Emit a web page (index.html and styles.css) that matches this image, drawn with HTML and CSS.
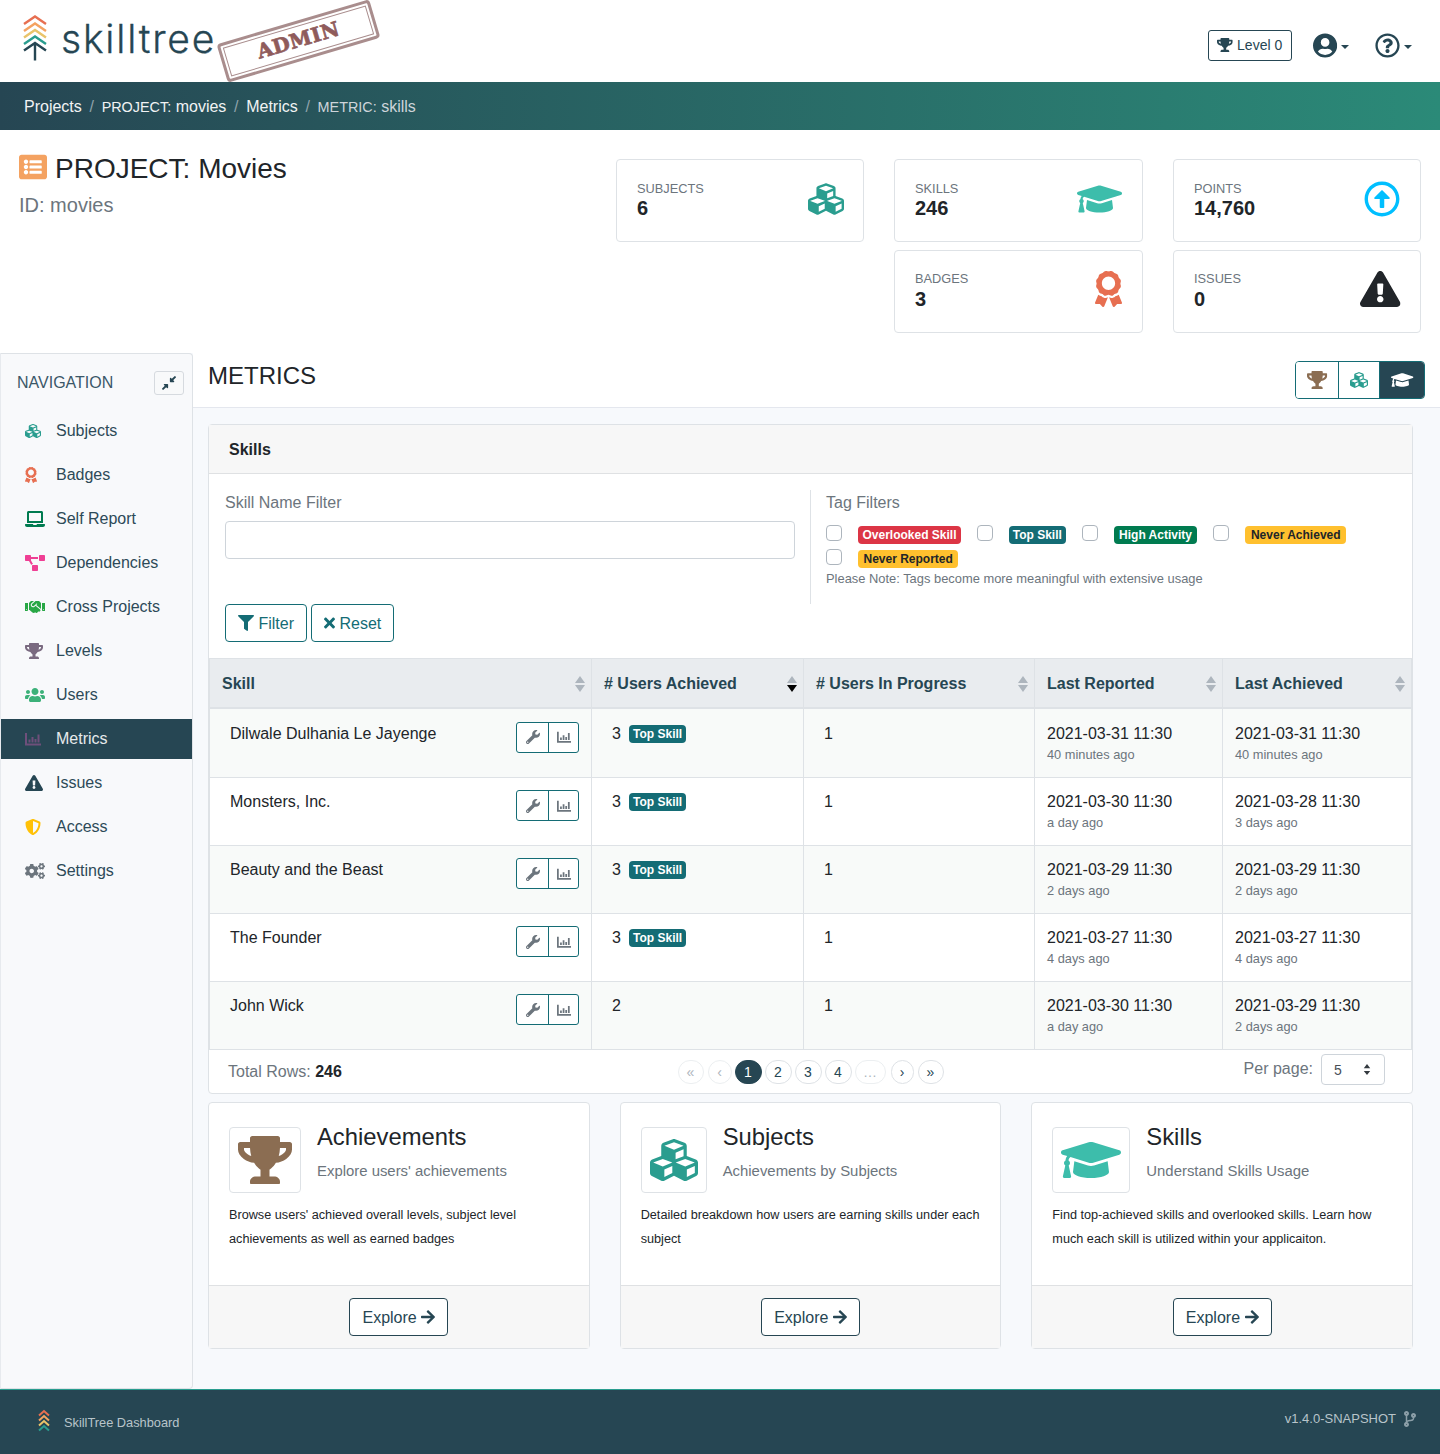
FILE: index.html
```html
<!DOCTYPE html>
<html lang="en">
<head>
<meta charset="utf-8">
<title>SkillTree Dashboard</title>
<link rel="stylesheet" href="styles.css">
</head>
<body>
<svg class="sprite" aria-hidden="true">
<symbol id="trophy" viewBox="0 0 576 512"><path d="M552 64H448V24c0-13.3-10.7-24-24-24H152c-13.3 0-24 10.7-24 24v40H24C10.7 64 0 74.7 0 88v56c0 35.7 22.5 72.4 61.9 100.7 31.5 22.7 69.8 37.1 110 41.7C203.3 338.5 240 360 240 360v72h-48c-35.3 0-64 20.7-64 56v12c0 6.6 5.4 12 12 12h296c6.6 0 12-5.4 12-12v-12c0-35.3-28.7-56-64-56h-48v-72s36.7-21.5 68.1-73.6c40.3-4.6 78.7-19 110-41.7 39.3-28.3 61.9-65 61.9-100.7V88c0-13.3-10.7-24-24-24zM99.3 192.8C74.9 175.2 64 155.6 64 144v-16h64.2c1 32.6 5.8 61.2 12.8 86.2-15.1-5.2-29.2-12.4-41.7-21.4zM512 144c0 16.1-17.7 36.1-35.3 48.8-12.5 9-26.7 16.2-41.8 21.4 7-25 11.8-53.6 12.8-86.2H512v16z"/></symbol>
<symbol id="cap" viewBox="0 0 640 512"><path d="M622.34 153.2L343.4 67.5c-15.2-4.67-31.6-4.67-46.79 0L17.66 153.2c-23.54 7.23-23.54 38.36 0 45.59l48.63 14.94c-10.67 13.19-17.23 29.28-17.88 46.9C38.78 266.15 32 276.11 32 288c0 10.78 5.68 19.85 13.86 25.65L20.33 428.53C18.11 438.52 25.71 448 35.94 448h56.11c10.24 0 17.84-9.48 15.62-19.47L82.14 313.65C90.32 307.85 96 298.78 96 288c0-11.57-6.47-21.25-15.66-26.87.76-15.02 8.44-28.3 20.69-36.72L296.6 284.5c9.06 2.78 26.44 6.25 46.79 0l278.95-85.7c23.55-7.24 23.55-38.36 0-45.6zM352.79 315.09c-28.53 8.76-52.84 3.92-65.59 0l-145.02-44.55L128 384c0 35.35 85.96 64 192 64s192-28.65 192-64l-14.18-113.47-145.03 44.56z"/></symbol>
<symbol id="cubes" viewBox="0 0 512 512"><path d="M488.6 250.2L392 214V105.5c0-15-9.3-28.4-23.4-33.7l-100-37.5c-8.1-3.1-17.1-3.1-25.3 0l-100 37.5c-14.1 5.3-23.4 18.7-23.4 33.7V214l-96.6 36.2C9.3 255.5 0 268.9 0 283.9V394c0 13.6 7.7 26.1 19.9 32.2l100 50c10.1 5.1 22.1 5.1 32.2 0l103.9-52 103.9 52c10.1 5.1 22.1 5.1 32.2 0l100-50c12.2-6.1 19.9-18.6 19.9-32.2V283.9c0-15-9.3-28.4-23.4-33.7zM358 214.8l-85 31.9v-68.2l85-37v73.3zM154 104.1l102-38.2 102 38.2v.6l-102 41.4-102-41.4v-.6zm84 291.1l-85 42.5v-79.1l85-38.8v75.4zm0-112l-102 41.4-102-41.4v-.6l102-38.2 102 38.2v.6zm240 112l-85 42.5v-79.1l85-38.8v75.4zm0-112l-102 41.4-102-41.4v-.6l102-38.2 102 38.2v.6z"/></symbol>
<symbol id="up" viewBox="0 0 512 512"><path d="M256 504c137 0 248-111 248-248S393 8 256 8 8 119 8 256s111 248 248 248zm0-448c110.5 0 200 89.5 200 200s-89.5 200-200 200S56 366.5 56 256 145.5 56 256 56zm20 328h-40c-6.6 0-12-5.4-12-12V256h-67c-10.7 0-16-12.9-8.5-20.5l99-99c4.7-4.7 12.3-4.7 17 0l99 99c7.6 7.6 2.2 20.5-8.5 20.5h-67v116c0 6.6-5.4 12-12 12z"/></symbol>
<symbol id="award" viewBox="0 0 384 512"><path d="M97.12 362.63c-8.69-8.69-4.16-6.24-25.12-11.85-9.51-2.55-17.87-7.45-25.43-13.32L1.2 448.7c-4.39 10.77 3.81 22.47 15.43 22.03l52.69-2.01L105.56 507c8 8.44 22.04 5.81 26.43-4.96l52.05-127.62c-10.84 6.04-22.87 9.58-35.31 9.58-19.5 0-37.82-7.59-51.61-21.37zM382.8 448.7l-45.37-111.24c-7.56 5.88-15.92 10.77-25.43 13.32-21.07 5.64-16.45 3.18-25.12 11.85-13.79 13.78-32.12 21.37-51.62 21.37-12.44 0-24.47-3.55-35.31-9.58L252 502.04c4.39 10.77 18.44 13.4 26.43 4.96l36.25-38.28 52.69 2.01c11.62.44 19.82-11.27 15.43-22.03zM263 340c15.28-15.55 17.03-14.21 38.79-20.14 13.89-3.79 24.75-14.84 28.47-28.98 7.48-28.4 5.54-24.97 25.95-45.75 10.17-10.35 14.14-25.44 10.42-39.58-7.47-28.38-7.48-24.42 0-52.83 3.72-14.14-.25-29.23-10.42-39.58-20.41-20.78-18.47-17.36-25.95-45.75-3.72-14.14-14.58-25.19-28.47-28.98-27.88-7.61-24.52-5.62-44.95-26.41-10.17-10.35-25-14.4-38.89-10.61-27.87 7.6-23.98 7.61-51.9 0-13.89-3.79-28.72.25-38.89 10.61-20.41 20.78-17.05 18.8-44.94 26.41-13.89 3.79-24.75 14.84-28.47 28.98-7.47 28.39-5.54 24.97-25.95 45.75-10.17 10.35-14.15 25.44-10.42 39.58 7.47 28.36 7.48 24.4 0 52.82-3.72 14.14.25 29.23 10.42 39.59 20.41 20.78 18.47 17.35 25.95 45.75 3.72 14.14 14.58 25.19 28.47 28.98C104.6 325.96 106.27 325 121 340c13.23 13.47 33.84 15.88 49.74 5.82a39.676 39.676 0 0 1 42.53 0c15.89 10.06 36.5 7.65 49.73-5.82zM97.66 175.96c0-53.03 42.24-96.02 94.34-96.02s94.34 42.99 94.34 96.02-42.24 96.02-94.34 96.02-94.34-42.99-94.34-96.02z"/></symbol>
<symbol id="warn" viewBox="0 0 576 512"><path d="M569.517 440.013C587.975 472.007 564.806 512 527.94 512H48.054c-36.937 0-59.999-40.055-41.577-71.987L246.423 24c18.467-32.009 64.72-31.951 83.154 0l239.94 416.013zM288 354c-25.405 0-46 20.595-46 46s20.595 46 46 46 46-20.595 46-46-20.595-46-46-46zm-43.673-165.346l7.418 136c.347 6.364 5.609 11.346 11.982 11.346h48.546c6.373 0 11.635-4.982 11.982-11.346l7.418-136c.375-6.874-5.098-12.654-11.982-12.654h-63.383c-6.884 0-12.356 5.78-11.981 12.654z"/></symbol>
<symbol id="listalt" viewBox="0 0 512 512"><path d="M464 480H48c-26.51 0-48-21.49-48-48V80c0-26.51 21.49-48 48-48h416c26.51 0 48 21.49 48 48v352c0 26.51-21.49 48-48 48zM128 120c-22.091 0-40 17.909-40 40s17.909 40 40 40 40-17.909 40-40-17.909-40-40-40zm0 96c-22.091 0-40 17.909-40 40s17.909 40 40 40 40-17.909 40-40-17.909-40-40-40zm0 96c-22.091 0-40 17.909-40 40s17.909 40 40 40 40-17.909 40-40-17.909-40-40-40zm288-136v-32c0-6.627-5.373-12-12-12H204c-6.627 0-12 5.373-12 12v32c0 6.627 5.373 12 12 12h200c6.627 0 12-5.373 12-12zm0 96v-32c0-6.627-5.373-12-12-12H204c-6.627 0-12 5.373-12 12v32c0 6.627 5.373 12 12 12h200c6.627 0 12-5.373 12-12zm0 96v-32c0-6.627-5.373-12-12-12H204c-6.627 0-12 5.373-12 12v32c0 6.627 5.373 12 12 12h200c6.627 0 12-5.373 12-12z"/></symbol>
<symbol id="user" viewBox="0 0 496 512"><path d="M248 8C111 8 0 119 0 256s111 248 248 248 248-111 248-248S385 8 248 8zm0 96c48.6 0 88 39.4 88 88s-39.4 88-88 88-88-39.4-88-88 39.4-88 88-88zm0 344c-58.7 0-111.3-26.6-146.5-68.2 18.8-35.4 55.6-59.8 98.5-59.8 2.4 0 4.8.4 7.1 1.1 13 4.2 26.6 6.9 40.9 6.9 14.3 0 28-2.7 40.9-6.9 2.3-.7 4.7-1.1 7.1-1.1 42.9 0 79.7 24.4 98.5 59.8C359.3 421.4 306.7 448 248 448z"/></symbol>
<symbol id="help" viewBox="0 0 512 512"><path d="M256 8C119.043 8 8 119.083 8 256c0 136.997 111.043 248 248 248s248-111.003 248-248C504 119.083 392.957 8 256 8zm0 448c-110.532 0-200-89.431-200-200 0-110.495 89.472-200 200-200 110.491 0 200 89.471 200 200 0 110.53-89.431 200-200 200zm107.244-255.2c0 67.052-72.421 68.084-72.421 92.863V300c0 6.627-5.373 12-12 12h-45.647c-6.627 0-12-5.373-12-12v-8.659c0-35.745 27.1-50.034 47.579-61.516 17.561-9.845 28.324-16.541 28.324-29.579 0-17.246-21.999-28.693-39.784-28.693-23.189 0-33.894 10.977-48.942 29.969-4.057 5.12-11.46 6.071-16.666 2.124l-27.824-21.098c-5.107-3.872-6.251-11.066-2.644-16.363C184.846 131.491 214.94 112 261.794 112c49.071 0 101.45 38.304 101.45 88.8zM298 368c0 23.159-18.841 42-42 42s-42-18.841-42-42 18.841-42 42-42 42 18.841 42 42z"/></symbol>
<symbol id="filter" viewBox="0 0 512 512"><path d="M487.976 0H24.028C2.71 0-8.047 25.866 7.058 40.971L192 225.941V432c0 7.831 3.821 15.17 10.237 19.662l80 55.98C298.02 518.69 320 507.493 320 487.98V225.941l184.947-184.97C520.021 25.896 509.338 0 487.976 0z"/></symbol>
<symbol id="times" viewBox="0 0 352 512"><path d="M242.72 256l100.07-100.07c12.28-12.28 12.28-32.19 0-44.48l-22.24-22.24c-12.28-12.28-32.19-12.28-44.48 0L176 189.28 75.93 89.21c-12.28-12.28-32.19-12.28-44.48 0L9.21 111.45c-12.28 12.28-12.28 32.19 0 44.48L109.28 256 9.21 356.07c-12.28 12.28-12.28 32.19 0 44.48l22.24 22.24c12.28 12.28 32.2 12.28 44.48 0L176 322.72l100.07 100.07c12.28 12.28 32.2 12.28 44.48 0l22.24-22.24c12.28-12.28 12.28-32.19 0-44.48L242.72 256z"/></symbol>
<symbol id="wrench" viewBox="0 0 512 512"><path d="M507.73 109.1c-2.24-9.03-13.54-12.09-20.12-5.51l-74.36 74.36-67.88-11.31-11.31-67.88 74.36-74.36c6.62-6.62 3.43-17.9-5.66-20.16-47.38-11.74-99.55.91-136.58 37.93-39.64 39.64-50.55 97.1-34.05 147.2L18.74 402.76c-24.99 24.99-24.99 65.51 0 90.5 24.99 24.99 65.51 24.99 90.5 0l213.21-213.21c50.12 16.71 107.47 5.68 147.37-34.22 37.07-37.07 49.7-89.32 37.91-136.73zM64 472c-13.25 0-24-10.75-24-24 0-13.26 10.75-24 24-24s24 10.74 24 24c0 13.25-10.75 24-24 24z"/></symbol>
<symbol id="chart" viewBox="0 0 16 16"><path d="M0 2h2v10.500h14v2H0zM3.500 8.500h2v3h-2zM6.500 6h2v5.500h-2zM9.500 8h2v3.500h-2zM12.500 3.500h2v8h-2z"/></symbol>
<symbol id="arrow" viewBox="0 0 448 512"><path d="M190.5 66.9l22.2-22.2c9.4-9.4 24.6-9.4 33.9 0L441 239c9.4 9.4 9.4 24.6 0 33.9L246.6 467.3c-9.4 9.4-24.6 9.4-33.9 0l-22.2-22.2c-9.5-9.5-9.3-25 .4-34.3L311.4 296H24c-13.3 0-24-10.7-24-24v-32c0-13.3 10.7-24 24-24h287.4L190.9 101.2c-9.8-9.3-10-24.8-.4-34.3z"/></symbol>
<symbol id="users" viewBox="0 0 640 512"><path d="M96 224c35.3 0 64-28.7 64-64s-28.7-64-64-64-64 28.7-64 64 28.7 64 64 64zm448 0c35.3 0 64-28.7 64-64s-28.7-64-64-64-64 28.7-64 64 28.7 64 64 64zm32 32h-64c-17.6 0-33.5 7.1-45.1 18.6 40.3 22.1 68.9 62 75.1 109.4h66c17.7 0 32-14.3 32-32v-32c0-35.3-28.7-64-64-64zm-256 0c61.9 0 112-50.1 112-112S381.9 32 320 32 208 82.1 208 144s50.1 112 112 112zm76.8 32h-8.3c-20.8 10-43.9 16-68.5 16s-47.6-6-68.5-16h-8.3C179.6 288 128 339.6 128 403.2V432c0 26.5 21.5 48 48 48h288c26.5 0 48-21.5 48-48v-28.8c0-63.6-51.6-115.2-115.2-115.2zm-223.7-13.4C161.5 263.1 145.6 256 128 256H64c-35.3 0-64 28.7-64 64v32c0 17.7 14.3 32 32 32h65.9c6.3-47.4 34.9-87.3 75.2-109.4z"/></symbol>
<symbol id="laptop" viewBox="0 0 640 512"><path d="M624 416H381.54c-.74 19.81-14.71 32-32.74 32H288c-18.69 0-33.02-17.47-32.77-32H16c-8.8 0-16 7.2-16 16v16c0 35.2 28.8 64 64 64h512c35.2 0 64-28.8 64-64v-16c0-8.8-7.2-16-16-16zM576 48c0-26.4-21.6-48-48-48H112C85.6 0 64 21.6 64 48v336h512V48zm-64 272H128V64h384v256z"/></symbol>
<symbol id="diagram" viewBox="0 0 640 512"><path d="M384 320H256c-17.67 0-32 14.33-32 32v128c0 17.67 14.33 32 32 32h128c17.67 0 32-14.33 32-32V352c0-17.67-14.33-32-32-32zM192 32c0-17.67-14.33-32-32-32H32C14.33 0 0 14.33 0 32v128c0 17.67 14.33 32 32 32h95.72l73.16 128.04C211.98 300.98 232.4 288 256 288h.28L192 175.51V128h224V64H192V32zM608 0H480c-17.67 0-32 14.33-32 32v128c0 17.67 14.33 32 32 32h128c17.67 0 32-14.33 32-32V32c0-17.67-14.33-32-32-32z"/></symbol>
<symbol id="handshake" viewBox="0 0 640 512"><path d="M434.7 64h-85.9c-8 0-15.7 3-21.6 8.4l-98.3 90c-.1.1-.2.3-.3.4-16.6 15.6-16.3 40.5-2.1 56 12.7 13.9 39.4 17.6 56.1 2.7.1-.1.3-.1.4-.2l79.9-73.2c6.5-5.9 16.7-5.5 22.6 1 6 6.5 5.5 16.6-1 22.6l-26.1 23.9L504 313.8c2.9 2.4 5.5 5 7.9 7.7V128l-54.6-54.6c-5.9-6-14.1-9.4-22.6-9.4zM544 128.2v223.9c0 17.7 14.3 32 32 32h64V128.2h-96zm48 223.9c-8.8 0-16-7.2-16-16s7.2-16 16-16 16 7.2 16 16-7.2 16-16 16zM0 384h64c17.7 0 32-14.3 32-32V128.2H0V384zm48-63.9c8.8 0 16 7.2 16 16s-7.2 16-16 16-16-7.2-16-16c0-8.9 7.2-16 16-16zm435.9 18.6L334.6 217.5l-30 27.5c-29.7 27.1-75.2 24.5-101.7-4.4-26.9-29.4-24.8-74.9 4.4-101.7L289.1 64h-83.8c-8.5 0-16.6 3.4-22.6 9.4L128 128v223.9h18.3l90.5 81.9c27.4 22.3 67.7 18.1 90-9.3l.2-.2 17.9 15.5c15.9 13 39.4 10.5 52.3-5.4l31.4-38.6 5.4 4.4c13.7 11.1 33.9 9.1 45-4.7l9.5-11.7c11.2-13.8 9.1-33.9-4.6-45.1z"/></symbol>
<symbol id="shield" viewBox="0 0 512 512"><path d="M466.5 83.7l-192-80a48.15 48.15 0 0 0-36.9 0l-192 80C27.7 91.1 16 108.6 16 128c0 198.5 114.5 335.7 221.5 380.3 11.8 4.9 25.1 4.9 36.9 0C360.1 472.6 496 349.3 496 128c0-19.4-11.7-36.9-29.5-44.3zM256.1 446.3l-.1-381 175.9 73.3c-3.3 151.4-82.1 261.1-175.8 307.7z"/></symbol>
<symbol id="cogs" viewBox="0 0 640 512"><path d="M512.1 191l-8.2 14.3c-3 5.3-9.4 7.5-15.1 5.4-11.8-4.4-22.6-10.7-32.1-18.6-4.6-3.8-5.8-10.5-2.8-15.7l8.2-14.3c-6.9-8-12.3-17.3-15.9-27.4h-16.5c-6 0-11.2-4.3-12.2-10.3-2-12-2.1-24.6 0-37.1 1-6 6.2-10.4 12.2-10.4h16.5c3.6-10.1 9-19.4 15.9-27.4l-8.2-14.3c-3-5.2-1.9-11.9 2.8-15.7 9.5-7.9 20.4-14.2 32.1-18.6 5.7-2.1 12.1.1 15.1 5.4l8.2 14.3c10.5-1.9 21.2-1.9 31.7 0L552 6.3c3-5.3 9.4-7.5 15.1-5.4 11.8 4.4 22.6 10.7 32.1 18.6 4.6 3.8 5.8 10.5 2.8 15.7l-8.2 14.3c6.9 8 12.3 17.3 15.9 27.4h16.5c6 0 11.2 4.3 12.2 10.3 2 12 2.1 24.6 0 37.1-1 6-6.2 10.4-12.2 10.4h-16.5c-3.6 10.1-9 19.4-15.9 27.4l8.2 14.3c3 5.2 1.9 11.9-2.8 15.7-9.5 7.9-20.4 14.2-32.1 18.6-5.7 2.1-12.1-.1-15.1-5.4l-8.2-14.3c-10.4 1.9-21.2 1.9-31.7 0zm-10.5-58.8c38.5 29.6 82.4-14.3 52.8-52.8-38.5-29.7-82.4 14.3-52.8 52.8zM386.3 286.1l33.7 16.8c10.1 5.8 14.5 18.1 10.5 29.1-8.9 24.2-26.4 46.4-42.6 65.8-7.4 8.9-20.2 11.1-30.3 5.3l-29.1-16.8c-16 13.7-34.6 24.6-54.9 31.7v33.6c0 11.6-8.3 21.6-19.7 23.6-24.6 4.2-50.4 4.4-75.9 0-11.5-2-20-11.9-20-23.6V418c-20.3-7.2-38.9-18-54.9-31.7L74 403c-10 5.8-22.9 3.6-30.3-5.3-16.2-19.4-33.3-41.6-42.2-65.7-4-10.9.4-23.2 10.5-29.1l33.3-16.8c-3.9-20.9-3.9-42.4 0-63.4L12 205.8c-10.1-5.8-14.6-18.1-10.5-29 8.9-24.2 26-46.4 42.2-65.8 7.4-8.9 20.2-11.1 30.3-5.3l29.1 16.8c16-13.7 34.6-24.6 54.9-31.7V57.1c0-11.5 8.2-21.5 19.6-23.5 24.6-4.2 50.5-4.4 76-.1 11.5 2 20 11.9 20 23.6v33.6c20.3 7.2 38.9 18 54.9 31.7l29.1-16.8c10-5.8 22.9-3.6 30.3 5.3 16.2 19.4 33.2 41.6 42.1 65.8 4 10.9.1 23.2-10 29.1l-33.7 16.8c3.9 21 3.9 42.5 0 63.5zm-117.6 21.1c59.2-77-28.7-164.9-105.7-105.7-59.2 77 28.7 164.9 105.7 105.7zm243.4 182.7l-8.2 14.3c-3 5.3-9.4 7.5-15.1 5.4-11.8-4.4-22.6-10.7-32.1-18.6-4.6-3.8-5.8-10.5-2.8-15.7l8.2-14.3c-6.9-8-12.3-17.3-15.9-27.4h-16.5c-6 0-11.2-4.3-12.2-10.3-2-12-2.1-24.6 0-37.1 1-6 6.2-10.4 12.2-10.4h16.5c3.6-10.1 9-19.4 15.9-27.4l-8.2-14.3c-3-5.2-1.9-11.9 2.8-15.7 9.5-7.9 20.4-14.2 32.1-18.6 5.7-2.1 12.1.1 15.1 5.4l8.2 14.3c10.5-1.9 21.2-1.9 31.7 0l8.2-14.3c3-5.3 9.4-7.5 15.1-5.4 11.8 4.4 22.6 10.7 32.1 18.6 4.6 3.8 5.8 10.5 2.8 15.7l-8.2 14.3c6.9 8 12.3 17.3 15.9 27.4h16.5c6 0 11.2 4.3 12.2 10.3 2 12 2.1 24.6 0 37.1-1 6-6.2 10.4-12.2 10.4h-16.5c-3.6 10.1-9 19.4-15.9 27.4l8.2 14.3c3 5.2 1.9 11.9-2.8 15.7-9.5 7.9-20.4 14.2-32.1 18.6-5.7 2.1-12.1-.1-15.1-5.4l-8.2-14.3c-10.4 1.9-21.2 1.9-31.7 0zM501.6 431c38.5 29.6 82.4-14.3 52.8-52.8-38.5-29.6-82.4 14.3-52.8 52.8z"/></symbol>
<symbol id="compress" viewBox="0 0 512 512"><path d="M200 288H88c-21.4 0-32.1 25.8-17 41l32.9 31-99.2 99.3c-6.2 6.2-6.2 16.4 0 22.6l25.4 25.4c6.2 6.2 16.4 6.2 22.6 0L152 408l31.1 33c15.1 15.1 40.9 4.4 40.9-17V312c0-13.3-10.7-24-24-24zm112-64h112c21.4 0 32.1-25.9 17-41l-33-31 99.3-99.3c6.2-6.2 6.2-16.4 0-22.6L481.9 4.7c-6.2-6.2-16.4-6.2-22.6 0L360 104l-31.1-33C313.8 55.9 288 66.6 288 88v112c0 13.3 10.7 24 24 24z"/></symbol>
<symbol id="branch" viewBox="0 0 384 512"><path d="M384 144c0-44.2-35.8-80-80-80s-80 35.8-80 80c0 36.4 24.3 67.1 57.5 76.8-.6 16.1-4.2 28.5-11 36.9-15.4 19.2-49.3 22.4-85.2 25.7-28.2 2.6-57.4 5.4-81.3 16.9v-144c32.5-10.2 56-40.5 56-76.3 0-44.2-35.8-80-80-80S0 35.8 0 80c0 35.8 23.5 66.1 56 76.3v199.3C23.5 365.9 0 396.2 0 432c0 44.2 35.8 80 80 80s80-35.8 80-80c0-34-21.2-63.1-51.2-74.6 3.1-5.2 7.8-9.8 14.9-13.4 16.2-8.2 40.4-10.4 66.1-12.8 42.2-3.9 90-8.4 118.2-43.4 14-17.4 21.1-39.8 21.6-67.9 31.6-10.8 54.4-40.7 54.4-75.9zM80 64c8.8 0 16 7.2 16 16s-7.2 16-16 16-16-7.2-16-16 7.2-16 16-16zm0 384c-8.8 0-16-7.2-16-16s7.2-16 16-16 16 7.2 16 16-7.2 16-16 16zm224-320c8.8 0 16 7.2 16 16s-7.2 16-16 16-16-7.2-16-16 7.2-16 16-16z"/></symbol>
<symbol id="sort" viewBox="0 0 10 16"><path d="M5 0l5 7H0z"/><path d="M0 9h10l-5 7z"/></symbol>
<symbol id="sortdown" viewBox="0 0 10 16"><path d="M5 0l5 7H0z" fill="#adb5bd"/><path d="M0 9h10l-5 7z" fill="#000"/></symbol>
</svg>

<header class="top">
  <a class="brand">
    <svg class="tree" viewBox="0 0 24 46" fill="none" stroke-width="2.4">
      <path d="M1 9l11-7.500 11 7.500" stroke="#e76f51"/>
      <path d="M1 16l11-7.500 11 7.500" stroke="#f4a261"/>
      <path d="M1 22.500l11-7.500 11 7.500" stroke="#e9c46a"/>
      <path d="M1 29l11-7.500 11 7.500" stroke="#2a9d8f"/>
      <path d="M1 35.500l11-7.500 11 7.500M12 28v17.500" stroke="#264653"/>
    </svg>
    <span class="wordmark">skilltree</span>
    <span class="stamp"><span class="stamp-in">ADMIN</span></span>
  </a>
  <div class="top-tools">
    <span class="level"><svg class="ic" viewBox="0 0 576 512"><use href="#trophy"/></svg> Level 0</span>
    <span class="menu"><svg class="ic" viewBox="0 0 496 512"><use href="#user"/></svg><i class="caret"></i></span>
    <span class="menu"><svg class="ic" viewBox="0 0 512 512"><use href="#help"/></svg><i class="caret"></i></span>
  </div>
</header>

<nav class="crumbs">
  <a>Projects</a><i>/</i>
  <a><small>PROJECT:</small> movies</a><i>/</i>
  <a>Metrics</a><i>/</i>
  <span><small>METRIC:</small> skills</span>
</nav>

<section class="project">
  <div class="proj-title">
    <h1><svg class="ic list" viewBox="0 0 512 512"><use href="#listalt"/></svg>PROJECT: Movies</h1>
    <p>ID: movies</p>
  </div>
  <div class="stats">
    <div class="stat"><div><h6>Subjects</h6><b>6</b></div><svg class="ic c-cubes" viewBox="0 0 512 512"><use href="#cubes"/></svg></div>
    <div class="stat"><div><h6>Skills</h6><b>246</b></div><svg class="ic c-cap" viewBox="0 0 640 512"><use href="#cap"/></svg></div>
    <div class="stat"><div><h6>Points</h6><b>14,760</b></div><svg class="ic c-up" viewBox="0 0 512 512"><use href="#up"/></svg></div>
    <div class="stat r2 s2"><div><h6>Badges</h6><b>3</b></div><svg class="ic c-award" viewBox="0 0 384 512"><use href="#award"/></svg></div>
    <div class="stat r2"><div><h6>Issues</h6><b>0</b></div><svg class="ic c-dark" viewBox="0 0 576 512"><use href="#warn"/></svg></div>
  </div>
</section>

<div class="layout">
  <aside class="side">
    <div class="side-head"><span>NAVIGATION</span><button class="collapse"><svg class="ic" viewBox="0 0 512 512"><use href="#compress"/></svg></button></div>
    <ul class="side-list">
      <li><svg class="ic c-cubes" viewBox="0 0 512 512"><use href="#cubes"/></svg><span>Subjects</span></li>
      <li><svg class="ic c-award" viewBox="0 0 384 512"><use href="#award"/></svg><span>Badges</span></li>
      <li><svg class="ic c-green" viewBox="0 0 640 512"><use href="#laptop"/></svg><span>Self Report</span></li>
      <li><svg class="ic c-pink" viewBox="0 0 640 512"><use href="#diagram"/></svg><span>Dependencies</span></li>
      <li><svg class="ic c-lime" viewBox="0 0 640 512"><use href="#handshake"/></svg><span>Cross Projects</span></li>
      <li><svg class="ic c-mauve" viewBox="0 0 576 512"><use href="#trophy"/></svg><span>Levels</span></li>
      <li><svg class="ic c-mint" viewBox="0 0 640 512"><use href="#users"/></svg><span>Users</span></li>
      <li class="active"><svg class="ic c-purple" viewBox="0 0 16 16"><use href="#chart"/></svg><span>Metrics</span></li>
      <li><svg class="ic c-navy" viewBox="0 0 576 512"><use href="#warn"/></svg><span>Issues</span></li>
      <li><svg class="ic c-yellow" viewBox="0 0 512 512"><use href="#shield"/></svg><span>Access</span></li>
      <li><svg class="ic c-gray" viewBox="0 0 640 512"><use href="#cogs"/></svg><span>Settings</span></li>
    </ul>
  </aside>

  <main class="main">
    <div class="main-head">
      <h2>METRICS</h2>
      <div class="tabs">
        <span class="tab"><svg class="ic c-brown" viewBox="0 0 576 512"><use href="#trophy"/></svg></span>
        <span class="tab"><svg class="ic c-cubes" viewBox="0 0 512 512"><use href="#cubes"/></svg></span>
        <span class="tab on"><svg class="ic" viewBox="0 0 640 512"><use href="#cap"/></svg></span>
      </div>
    </div>

    <div class="content">
      <section class="card">
        <div class="card-head">Skills</div>
        <div class="filters">
          <div class="filter-name">
            <label class="flabel">Skill Name Filter</label>
            <input class="text-input" type="text">
          </div>
          <div class="filter-tags">
            <label class="flabel">Tag Filters</label>
            <div class="tags">
              <span class="tag"><i class="check"></i><em class="badge red">Overlooked Skill</em></span>
              <span class="tag"><i class="check"></i><em class="badge teal">Top Skill</em></span>
              <span class="tag"><i class="check"></i><em class="badge green">High Activity</em></span>
              <span class="tag"><i class="check"></i><em class="badge amber">Never Achieved</em></span>
              <span class="tag"><i class="check"></i><em class="badge amber">Never Reported</em></span>
            </div>
            <p class="note">Please Note: Tags become more meaningful with extensive usage</p>
          </div>
        </div>
        <div class="filter-btns">
          <button class="btn"><svg class="ic" viewBox="0 0 512 512"><use href="#filter"/></svg> Filter</button>
          <button class="btn"><svg class="ic" viewBox="0 0 352 512"><use href="#times"/></svg> Reset</button>
        </div>

        <table class="grid">
          <colgroup><col class="w1"><col class="w2"><col class="w3"><col class="w4"><col class="w5"></colgroup>
          <thead>
            <tr>
              <th><div class="th"><span>Skill</span><svg class="sort" viewBox="0 0 10 16"><use href="#sort"/></svg></div></th>
              <th><div class="th"><span># Users Achieved</span><svg class="sort" viewBox="0 0 10 16"><use href="#sortdown"/></svg></div></th>
              <th><div class="th"><span># Users In Progress</span><svg class="sort" viewBox="0 0 10 16"><use href="#sort"/></svg></div></th>
              <th><div class="th"><span>Last Reported</span><svg class="sort" viewBox="0 0 10 16"><use href="#sort"/></svg></div></th>
              <th><div class="th"><span>Last Achieved</span><svg class="sort" viewBox="0 0 10 16"><use href="#sort"/></svg></div></th>
            </tr>
          </thead>
          <tbody>
            <tr class="first">
              <td><div class="skill"><span>Dilwale Dulhania Le Jayenge</span><span class="mini"><a><svg class="ic" viewBox="0 0 512 512"><use href="#wrench"/></svg></a><a><svg class="ic" viewBox="0 0 16 16"><use href="#chart"/></svg></a></span></div></td>
              <td class="num">3<em class="badge teal">Top Skill</em></td>
              <td class="num">1</td>
              <td>2021-03-31 11:30<small>40 minutes ago</small></td>
              <td>2021-03-31 11:30<small>40 minutes ago</small></td>
            </tr>
            <tr>
              <td><div class="skill"><span>Monsters, Inc.</span><span class="mini"><a><svg class="ic" viewBox="0 0 512 512"><use href="#wrench"/></svg></a><a><svg class="ic" viewBox="0 0 16 16"><use href="#chart"/></svg></a></span></div></td>
              <td class="num">3<em class="badge teal">Top Skill</em></td>
              <td class="num">1</td>
              <td>2021-03-30 11:30<small>a day ago</small></td>
              <td>2021-03-28 11:30<small>3 days ago</small></td>
            </tr>
            <tr>
              <td><div class="skill"><span>Beauty and the Beast</span><span class="mini"><a><svg class="ic" viewBox="0 0 512 512"><use href="#wrench"/></svg></a><a><svg class="ic" viewBox="0 0 16 16"><use href="#chart"/></svg></a></span></div></td>
              <td class="num">3<em class="badge teal">Top Skill</em></td>
              <td class="num">1</td>
              <td>2021-03-29 11:30<small>2 days ago</small></td>
              <td>2021-03-29 11:30<small>2 days ago</small></td>
            </tr>
            <tr>
              <td><div class="skill"><span>The Founder</span><span class="mini"><a><svg class="ic" viewBox="0 0 512 512"><use href="#wrench"/></svg></a><a><svg class="ic" viewBox="0 0 16 16"><use href="#chart"/></svg></a></span></div></td>
              <td class="num">3<em class="badge teal">Top Skill</em></td>
              <td class="num">1</td>
              <td>2021-03-27 11:30<small>4 days ago</small></td>
              <td>2021-03-27 11:30<small>4 days ago</small></td>
            </tr>
            <tr>
              <td><div class="skill"><span>John Wick</span><span class="mini"><a><svg class="ic" viewBox="0 0 512 512"><use href="#wrench"/></svg></a><a><svg class="ic" viewBox="0 0 16 16"><use href="#chart"/></svg></a></span></div></td>
              <td class="num">2</td>
              <td class="num">1</td>
              <td>2021-03-30 11:30<small>a day ago</small></td>
              <td>2021-03-29 11:30<small>2 days ago</small></td>
            </tr>
          </tbody>
        </table>

        <div class="pager-row">
          <div class="total">Total Rows: <b>246</b></div>
          <div class="pager">
            <a class="off p26">«</a><a class="off p24">‹</a><a class="cur">1</a><a>2</a><a>3</a><a>4</a><a class="off dots">…</a><a class="p23">›</a><a class="p26 last">»</a>
          </div>
          <div class="perpage"><span>Per page:</span><span class="select">5<svg class="updown" viewBox="0 0 8 12"><path d="M4 0l3.500 4.500h-7zM.5 7.500h7L4 12z"/></svg></span></div>
        </div>
      </section>

      <div class="explore">
        <article class="ex-card">
          <div class="ex-body">
            <div class="ex-top">
              <span class="ex-icon"><svg class="ic c-brown" viewBox="0 0 576 512"><use href="#trophy"/></svg></span>
              <div><h3>Achievements</h3><p>Explore users' achievements</p></div>
            </div>
            <p class="ex-desc">Browse users' achieved overall levels, subject level achievements as well as earned badges</p>
          </div>
          <div class="ex-foot"><button class="btn dark">Explore <svg class="ic" viewBox="0 0 448 512"><use href="#arrow"/></svg></button></div>
        </article>
        <article class="ex-card">
          <div class="ex-body">
            <div class="ex-top">
              <span class="ex-icon"><svg class="ic c-cubes" viewBox="0 0 512 512"><use href="#cubes"/></svg></span>
              <div><h3>Subjects</h3><p>Achievements by Subjects</p></div>
            </div>
            <p class="ex-desc">Detailed breakdown how users are earning skills under each subject</p>
          </div>
          <div class="ex-foot"><button class="btn dark">Explore <svg class="ic" viewBox="0 0 448 512"><use href="#arrow"/></svg></button></div>
        </article>
        <article class="ex-card">
          <div class="ex-body">
            <div class="ex-top">
              <span class="ex-icon"><svg class="ic c-cap" viewBox="0 0 640 512"><use href="#cap"/></svg></span>
              <div><h3>Skills</h3><p>Understand Skills Usage</p></div>
            </div>
            <p class="ex-desc">Find top-achieved skills and overlooked skills. Learn how much each skill is utilized within your applicaiton.</p>
          </div>
          <div class="ex-foot"><button class="btn dark">Explore <svg class="ic" viewBox="0 0 448 512"><use href="#arrow"/></svg></button></div>
        </article>
      </div>
    </div>
  </main>
</div>

<footer class="foot">
  <div class="foot-left">
    <svg class="foot-logo" viewBox="0 0 12 23" fill="none" stroke-width="2">
      <path d="M1 6.500L6 2l5 4.500" stroke="#e76f51"/>
      <path d="M1 11.500L6 7l5 4.500" stroke="#f4a261"/>
      <path d="M1 16.500L6 12l5 4.500" stroke="#e9c46a"/>
      <path d="M1 21.500L6 17l5 4.500" stroke="#2a9d8f"/>
    </svg>
    <span>SkillTree Dashboard</span>
  </div>
  <div class="foot-right"><span>v1.4.0-SNAPSHOT</span><svg class="ic" viewBox="0 0 384 512"><use href="#branch"/></svg></div>
</footer>
</body>
</html>
```

FILE: styles.css
```css
* { box-sizing: border-box; }
html, body { margin: 0; padding: 0; }
body {
  width: 1440px;
  font-family: "Liberation Sans", Arial, sans-serif;
  font-size: 16px;
  line-height: 24px;
  color: #212529;
  background: #fff;
}
h1, h2, h3, h6, p, ul { margin: 0; padding: 0; font-weight: 400; }
em, i { font-style: normal; }
.sprite { display: none; }
.ic { height: 1em; width: auto; fill: currentColor; display: inline-block; vertical-align: -0.125em; overflow: visible; }

.c-cubes { color: #2a9d8f; }
.c-cap { color: #3dbdab; }
.c-up { color: #00bfff; }
.c-award { color: #e76f51; }
.c-dark { color: #212529; }
.c-green { color: #007b50; }
.c-pink { color: #ef3f94; }
.c-lime { color: #28a745; }
.c-mauve { color: #7a6a80; }
.c-mint { color: #3cb179; }
.c-purple { color: #6e4f7b; }
.c-navy { color: #264653; }
.c-yellow { color: #ffc107; }
.c-gray { color: #6c757d; }
.c-brown { color: #8b6d52; }

/* top */
.top { height: 82px; display: flex; justify-content: space-between; align-items: flex-start; padding: 0 28px 0 23px; }
.brand { position: relative; display: flex; align-items: flex-start; }
.tree { width: 24px; height: 46px; margin-top: 15px; }
.wordmark { margin: 14px 0 0 14px; font-family: "Inter", sans-serif; font-weight: 300; font-size: 39px; line-height: 50px; color: #264653; letter-spacing: 1.800px; -webkit-text-stroke: 0.300px #264653; }
.stamp {
  position: absolute; left: 196px; top: 21px; width: 159px; height: 40px;
  transform: rotate(-16.500deg);
  border: 3px solid #a98d8d; border-radius: 4px; padding: 2px;
  display: block;
}
.stamp-in {
  display: block; height: 100%;
  border: 1px solid #a98d8d;
  text-align: center;
  font-family: "DejaVu Serif", serif; font-weight: 900; font-size: 20px; line-height: 27px;
  letter-spacing: 0.500px; color: #8f5b5b; -webkit-text-stroke: 0.700px #8f5b5b;
}
.top-tools { display: flex; align-items: center; margin-top: 30px; color: #264653; }
.level { display: flex; align-items: center; gap: 4px; height: 31px; width: 84px; justify-content: center; border: 1px solid #264653; border-radius: 3px; font-size: 14px; padding-bottom: 1px; margin-right: 1px; }
.level .ic { height: 14px; }
.menu { display: flex; align-items: center; font-size: 25px; margin-left: 20px; }
.menu + .menu { margin-left: 26px; }
.menu .ic { height: 25px; }
.caret { width: 0; height: 0; border: 4px solid transparent; border-top-color: #264653; border-bottom: 0; margin-left: 4px; margin-top: 3px; }

/* breadcrumbs */
.crumbs { height: 48px; display: flex; align-items: center; padding: 2px 0 0 24px; color: #f1f3f4; background: linear-gradient(90deg, #264653, #2b8a78); }
.crumbs small { font-size: 14.400px; }
.crumbs i { color: #8ea3ac; padding: 0 7.700px; }
.crumbs span { color: #ced4da; }

/* project */
.project { height: 223px; display: flex; justify-content: space-between; padding: 25px 19px 0; }
.proj-title h1 { font-size: 28px; line-height: 28px; display: flex; align-items: center; gap: 8px; margin-top: 0; }
.list { height: 28px; color: #f4a261; margin-top: -4px; }
.proj-title p { font-size: 20px; line-height: 24px; color: #6c757d; margin-top: 10px; }
.stats { width: 805px; display: grid; grid-template-columns: 248px 249px 248px; grid-auto-rows: 83px; gap: 8px 30px; margin-top: 4px; }
.stat { border: 1px solid #dee2e6; border-radius: 4px; padding: 20px 20px; display: flex; justify-content: space-between; align-items: flex-start; background: #fff; }
.s2 { grid-column: 2; }
.stat h6 { font-size: 12.800px; line-height: 15px; padding-top: 1px; color: #6c757d; text-transform: uppercase; }
.stat b { display: block; font-size: 20px; line-height: 24px; font-weight: 700; }
.stat .ic { height: 36px; margin-top: 1px; }
.stat .c-cubes { margin-right: -1px; }
.r2 h6 { padding: 0 0 1px; }
.stat.r2 .ic { margin-top: 0; }

/* layout */
.layout { display: flex; height: 1036px; background: #f7f9fc; }
.side { width: 193px; flex: none; background: #f8f9fb; border: 1px solid #dee2e6; border-radius: 0 4px 4px 0; border-left-color: #e7eaee; }
.side-head { height: 57px; padding: 1px 8px 0 16px; display: flex; justify-content: space-between; align-items: center; font-size: 16px; color: #3b5768; }
.collapse { width: 30px; height: 24px; padding: 0; background: #f8f9fa; border: 1px solid #d6dadf; border-radius: 3px; color: #264653; font-size: 14px; line-height: 1; display: flex; align-items: center; justify-content: center; }
.side-list { list-style: none; }
.side-list li { height: 40px; margin-bottom: 4px; align-items: center; padding-left: 24px; color: #2d4a58; display: grid; grid-template-columns: 31px 1fr; }
.side-list .active { background: #264653; color: #e6eaec; }
.side-list .active .c-purple { color: #6e4f7b; }

.main { flex: 1; min-width: 0; }
.main-head { height: 55px; background: #fff; border-bottom: 1px solid #e4e7ee; display: flex; justify-content: space-between; padding: 8px 15px 0; }
.main-head h2 { font-size: 24px; line-height: 30px; color: #212529; }
.tabs { display: flex; height: 38px; border: 1px solid #146c75; border-radius: 4px; overflow: hidden; }
.tab { display: flex; align-items: center; justify-content: center; width: 41px; font-size: 18px; background: #fff; }
.tab:first-child { width: 42px; }
.tab + .tab { border-left: 1px solid #146c75; }
.tab:last-child { width: 45px; }
.tab.on { background: #264653; color: #fff; }

.content { padding: 16px 27px 0 15px; }
.card { background: #fff; border: 1px solid #dee2e6; border-radius: 4px; }
.card-head { height: 49px; padding: 13px 20px 0; font-weight: 700; background: #f7f7f7; border-bottom: 1px solid #dfe1e3; }
.filters { display: flex; padding: 16px 0 0 16px; height: 130px; }
.filter-name { width: 570px; margin-right: 15px; }
.filter-tags { flex: 1; border-left: 1px solid #dee2e6; padding-left: 15px; margin-right: 16px; }
.flabel { display: block; color: #6c757d; margin-top: 1px; }
.text-input { display: block; width: 100%; height: 38px; margin-top: 6px; border: 1px solid #ced4da; border-radius: 4px; background: #fff; }
.tags { display: flex; flex-wrap: wrap; column-gap: 16px; margin-top: 8px; }
.tag { display: flex; align-items: flex-start; gap: 16px; height: 24px; }
.check { width: 16px; height: 16px; border: 1px solid #adb5bd; border-radius: 4px; background: #fff; margin-top: 2px; flex: none; }
.badge { display: inline-block; font-size: 12px; font-weight: 700; line-height: 12px; padding: 3px 5.500px; border-radius: 4px; margin-top: 3px; }
.red { background: #dc3545; color: #fff; padding: 3px 4.500px; }
.teal { background: #146c75; color: #fff; padding: 3px 3.700px; }
.green { background: #007b50; color: #fff; }
.amber { background: #ffc02e; color: #212529; }
.note { font-size: 12.900px; line-height: 15px; color: #6c757d; }
.filter-btns { display: flex; gap: 4px; padding: 0 0 16px 16px; }
.btn { height: 38px; padding: 2px 12px 0; border: 1px solid #146c75; border-radius: 4px; background: #fff; color: #146c75; font: inherit; }
.btn.dark { border-color: #264653; color: #264653; padding: 2px 12px 0; }

.grid { width: 1202px; table-layout: fixed; border-collapse: collapse; }
.w1 { width: 382px; } .w2 { width: 212px; } .w3 { width: 231px; } .w4 { width: 188px; } .w5 { width: 189px; }
.grid th { height: 49px; padding: 3px 6px 0 12px; text-align: left; background: #e9ecef; color: #264653; border: 1px solid #dee2e6; border-bottom-width: 2px; font-weight: 700; }
.th { display: flex; justify-content: space-between; align-items: center; }
.sort { width: 10px; height: 16px; fill: #adb5bd; flex: none; }
.grid td { height: 68px; padding: 12px 12px 0; vertical-align: top; border: 1px solid #dee2e6; }
.grid tr.first td { height: 70px; padding-top: 13px; }
.grid tbody tr:nth-child(odd) { background: #f8faf9; }
.grid td small { display: block; font-size: 12.800px; line-height: 18px; color: #6c757d; margin-top: 0; }
.grid td.num { padding-left: 20px; }
.num .badge { margin: 0 0 0 8px; vertical-align: 1px; padding: 3px 4.200px; }
.skill { display: flex; justify-content: space-between; align-items: flex-start; padding-left: 8px; }
.mini { display: flex; height: 31px; border: 1px solid #146c75; border-radius: 3px; background: #fff; font-size: 14px; color: #6c757d; }
.mini a { width: 31px; display: flex; align-items: center; justify-content: center; }
.mini a + a { border-left: 1px solid #146c75; width: 30px; }

.pager-row { display: grid; grid-template-columns: 1fr auto 1fr; height: 43px; padding: 0 27px; }
.total { color: #6c757d; padding-top: 10px; margin-left: -8px; }
.total b { color: #212529; }
.pager { display: flex; gap: 3px; padding-top: 10px; font-size: 14px; line-height: 22px; color: #264653; }
.pager a { width: 27px; height: 24px; text-align: center; border: 1px solid #dee2e6; border-radius: 12px; background: #fff; }
.pager .off { color: #adb5bd; border-color: #eceff1; }
.pager .cur { background: #264653; border-color: #264653; color: #fff; }
.pager .p26 { width: 26px; }
.pager .p24 { width: 24px; margin-left: 1px; }
.pager .p23 { width: 23px; margin-left: 2px; }
.pager .last { margin-left: 1px; }
.pager .dots { width: 31px; }
.perpage { display: flex; justify-content: flex-end; gap: 8px; color: #6c757d; padding-top: 4px; }
.perpage span:first-child { padding-top: 3px; }
.select { width: 64px; height: 31px; border: 1px solid #ced4da; border-radius: 4px; padding: 0 13px 0 12px; display: flex; justify-content: space-between; align-items: center; font-size: 14px; color: #495057; background: #fff; }
.updown { width: 8px; height: 11px; fill: #343a40; }

.explore { display: grid; grid-template-columns: repeat(3, 1fr); gap: 30px; margin-top: 8px; }
.ex-card { height: 247px; background: #fff; border: 1px solid #dee2e6; border-radius: 4px; display: flex; flex-direction: column; }
.ex-body { flex: 1; padding: 24px 16px 0 20px; }
.ex-top { display: flex; gap: 16px; }
.ex-icon { flex: none; height: 66px; padding: 8px; border: 1px solid #dee2e6; border-radius: 4px; background: #fff; font-size: 48px; line-height: 48px; display: flex; align-items: center; }
.ex-icon .ic { display: block; }
.ex-top h3 { font-size: 23.800px; line-height: 20px; margin-bottom: 14px; }
.ex-top p { font-size: 14.900px; line-height: 20px; color: #6c757d; }
.ex-desc { font-size: 12.680px; line-height: 24px; margin-top: 10px; color: #212529; }
.ex-foot { height: 63px; background: #f7f7f7; border-top: 1px solid #dfe1e3; display: flex; align-items: center; justify-content: center; }

/* footer */
.foot { height: 65px; background: #264653; border-top: 1px solid #2a9d8f; display: flex; justify-content: space-between; align-items: flex-start; padding: 0 24px 0 38px; font-size: 12.800px; color: #b8c4ca; }
.foot-left { display: flex; align-items: flex-start; padding-top: 19px; }
.foot-logo { width: 12px; height: 23px; }
.foot-left span { margin-left: 14px; padding-top: 2px; }
.foot-right { display: flex; align-items: center; gap: 8px; padding-top: 17px; font-size: 13px; }
.foot-right .ic { height: 16px; color: #8c9fa8; }
```
